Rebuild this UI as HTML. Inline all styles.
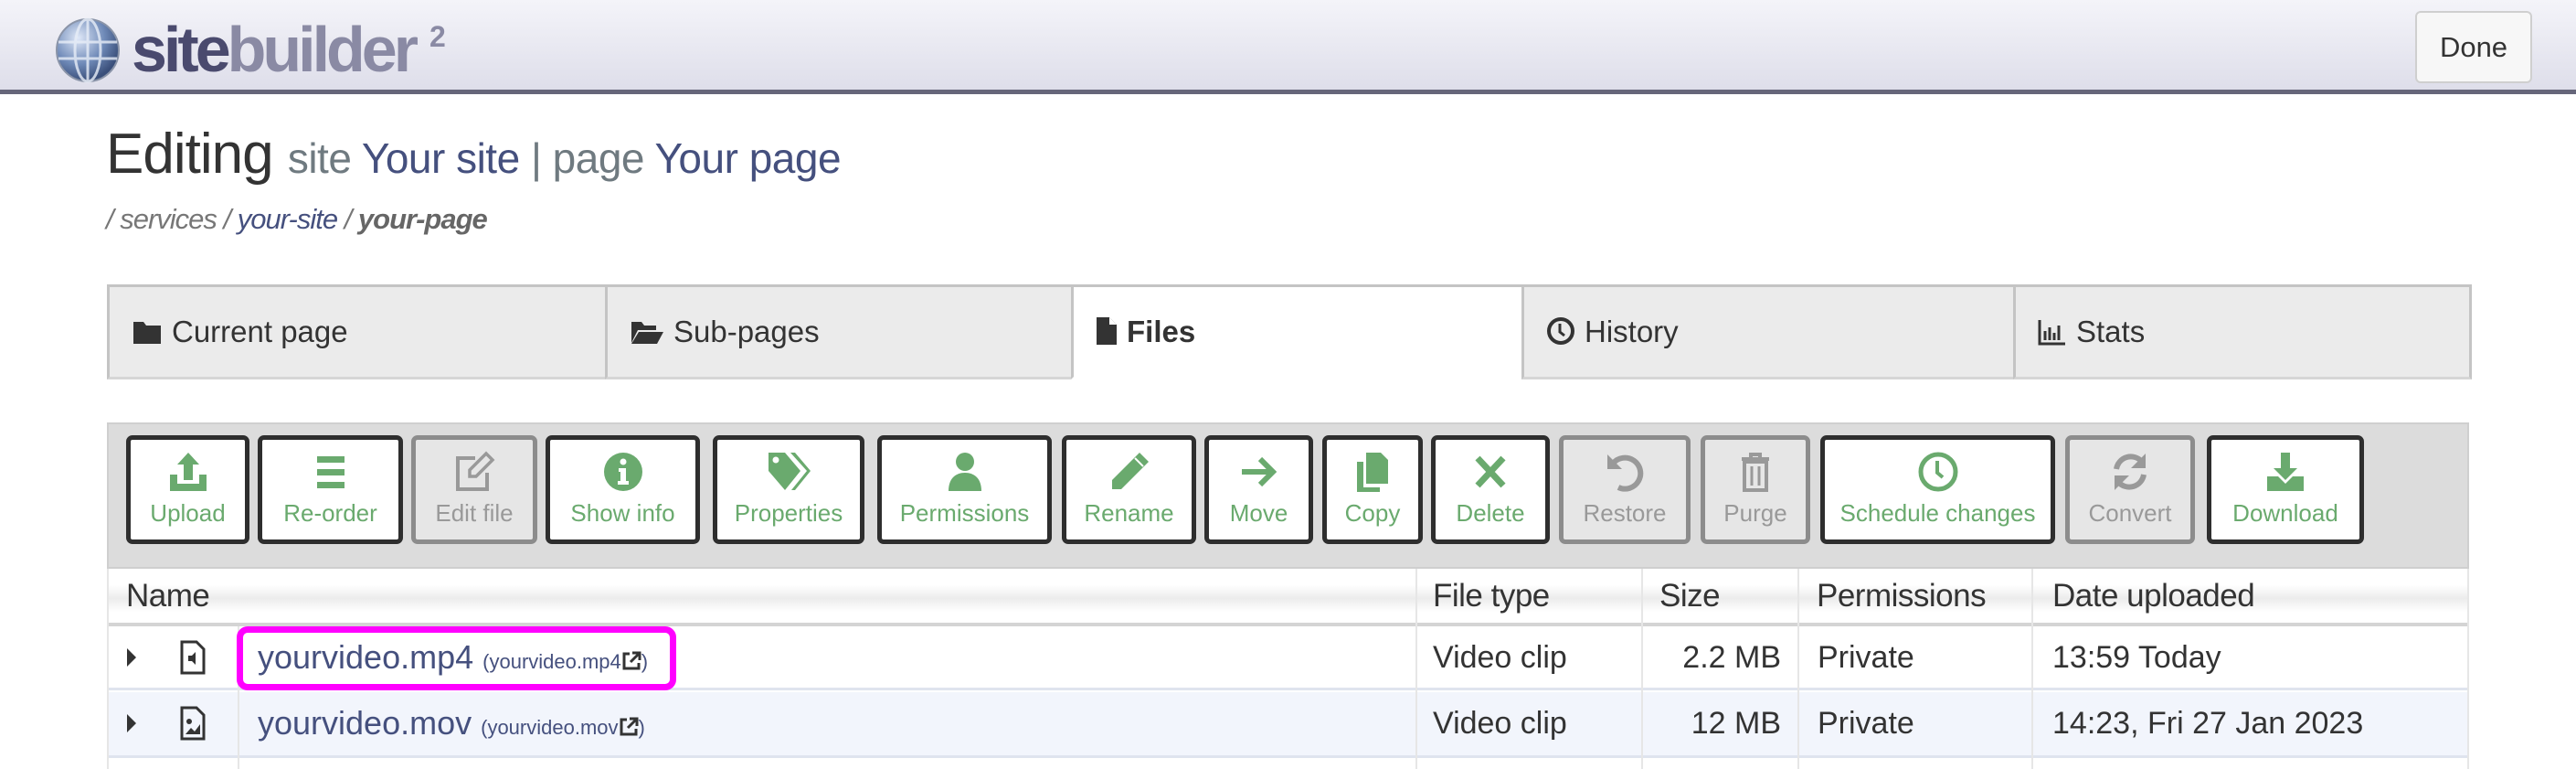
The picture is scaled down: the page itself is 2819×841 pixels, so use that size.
<!DOCTYPE html>
<html><head><meta charset="utf-8"><style>
*{box-sizing:border-box;margin:0;padding:0}
body{width:2819px;height:841px;overflow:hidden;background:#fff;font-family:"Liberation Sans",sans-serif;position:relative;color:#333}
.a{position:absolute}
.hdr{left:0;top:0;width:2819px;height:103px;background:linear-gradient(#f4f4f9,#dedeea);border-bottom:5px solid #66667a}
.tab{position:absolute;top:311px;height:104px;background:#ebebeb;border:3px solid #c4c4c4;border-bottom:3px solid #d6d6d6;font-size:33px;color:#333;padding-left:24px;line-height:98px;white-space:nowrap}
.tab svg{vertical-align:-4px;margin-right:10px}
.btn{position:absolute;top:476px;height:119px;border:5px solid #2e2e2e;border-radius:7px;background:#fff;color:#6aaa6e;font-size:26px;text-align:center;white-space:nowrap}
.btn.d{border-color:#8c8c8c;background:#e6e6e6;color:#999}
.btn svg{position:absolute;left:50%;top:12px;transform:translateX(-50%)}
.btn span{position:absolute;left:0;right:0;top:65px}
.th{position:absolute;top:632px;font-size:35px;color:#333;letter-spacing:-0.5px}
.td{position:absolute;font-size:34px;color:#333}
.vl{position:absolute;width:2px;background:#e6e6e6}
.lnk{color:#45507e}
</style></head><body>
<div class="a hdr"></div>
<svg class="a" style="left:58px;top:18px" width="76" height="74" viewBox="0 0 76 74"><defs><radialGradient id="g" cx="35%" cy="30%" r="70%"><stop offset="0" stop-color="#dfe8f8"/><stop offset=".6" stop-color="#6f8ab8"/><stop offset="1" stop-color="#3a4f7a"/></radialGradient></defs><circle cx="38" cy="37" r="34" fill="url(#g)" stroke="#8a94a8" stroke-width="2"/><g fill="none" stroke="#e8eef8" stroke-width="3" opacity=".8"><ellipse cx="38" cy="37" rx="14" ry="34"/><path d="M6 28 H70 M6 46 H70 M38 3 V71"/></g></svg>
<div class="a" style="left:144px;top:14px;font-size:70px;font-weight:bold;letter-spacing:-4px;color:#4a4a6e;line-height:80px">site<span style="color:#8a8aa4;font-weight:bold">builder</span></div>
<div class="a" style="left:470px;top:22px;font-size:32px;font-weight:bold;color:#8a8aa4">2</div>
<div class="a" style="left:2643px;top:12px;width:128px;height:79px;border:2px solid #cfcfcf;border-radius:6px;background:#f7f7f7;font-size:31px;line-height:75px;text-align:center;color:#333">Done</div>

<div class="a" style="left:116px;top:133px;font-size:62px;color:#333;white-space:nowrap;letter-spacing:-1px">Editing <span style="font-size:46px;color:#6f7a80;letter-spacing:-0.5px">site <span class="lnk">Your site</span> | page <span class="lnk">Your page</span></span></div>
<div class="a" style="left:116px;top:222px;font-size:31px;font-style:italic;color:#777;white-space:nowrap;letter-spacing:-1px">/ services / <span class="lnk">your-site</span> / <b style="color:#666">your-page</b></div>

<div class="tab" style="left:117px;width:548px"><svg width="34" height="30" viewBox="0 0 34 30"><path d="M2 4h11l3 4h16v20H2z" fill="#333"/></svg>Current page</div>
<div class="tab" style="left:662px;width:513px"><svg width="38" height="30" viewBox="0 0 38 30"><path d="M2 4h11l3 4h13v5H9L2 27z" fill="#333"/><path d="M10 15h27l-7 13H2z" fill="#333"/></svg>Sub-pages</div>
<div class="tab" style="left:1172px;width:496px;background:#fff;border-bottom-color:#fff;font-weight:bold"><svg width="24" height="32" viewBox="0 0 24 32"><path d="M1 1h14l8 8v22H1z" fill="#333"/><path d="M15 1v8h8" fill="#fff"/></svg>Files</div>
<div class="tab" style="left:1665px;width:541px"><svg width="32" height="32" viewBox="0 0 32 32"><circle cx="16" cy="16" r="13" fill="none" stroke="#333" stroke-width="4"/><path d="M15 8v9l5 4" stroke="#333" stroke-width="3" fill="none"/></svg>History</div>
<div class="tab" style="left:2203px;width:502px"><svg width="32" height="30" viewBox="0 0 32 30"><path d="M2 2v26h28" stroke="#333" stroke-width="3" fill="none"/><path d="M8 14v10M13 10v14M18 16v8M23 8v16" stroke="#333" stroke-width="3"/></svg>Stats</div>

<div class="a" style="left:117px;top:462px;width:2585px;height:160px;background:#dcdcdc;border:2px solid #cfcfcf"></div>

<div class="btn" style="left:138px;width:135px"><svg width="46" height="46" viewBox="0 0 46 46"><path d="M23 2l12 13h-7v17h-10V15h-7z" fill="#6aaa6e"/><path d="M3 26h8v10h24V26h8v18H3z" fill="#6aaa6e"/></svg><span>Upload</span></div>
<div class="btn" style="left:282px;width:159px"><svg width="46" height="46" viewBox="0 0 46 46"><path d="M8 6h30v7H8zM8 20h30v7H8zM8 34h30v7H8z" fill="#6aaa6e"/></svg><span>Re-order</span></div>
<div class="btn d" style="left:450px;width:138px"><svg width="46" height="46" viewBox="0 0 46 46"><path d="M24 8H5v34h32V24" fill="none" stroke="#999" stroke-width="4"/><path d="M36 3l7 7-18 18h-7v-7z" fill="none" stroke="#999" stroke-width="3.5"/></svg><span>Edit file</span></div>
<div class="btn" style="left:597px;width:169px"><svg width="46" height="46" viewBox="0 0 46 46"><circle cx="23" cy="23" r="21" fill="#6aaa6e"/><circle cx="23" cy="12" r="3.5" fill="#fff"/><path d="M18 19h8v14h3v4H17v-4h3v-10h-2z" fill="#fff"/></svg><span>Show info</span></div>
<div class="btn" style="left:780px;width:166px"><svg width="50" height="46" viewBox="0 0 50 46"><path d="M3 2h18l17 20-17 21L3 22z" fill="#6aaa6e"/><circle cx="11" cy="10" r="3.5" fill="#fff"/><path d="M27 2h5l17 20-17 21h-4l17-21z" fill="#6aaa6e"/></svg><span>Properties</span></div>
<div class="btn" style="left:960px;width:191px"><svg width="46" height="46" viewBox="0 0 46 46"><circle cx="23" cy="12" r="10" fill="#6aaa6e"/><path d="M5 44c0-14 8-20 18-20s18 6 18 20z" fill="#6aaa6e"/></svg><span>Permissions</span></div>
<div class="btn" style="left:1162px;width:147px"><svg width="46" height="46" viewBox="0 0 46 46"><path d="M34 2l10 10L14 42H4V32z" fill="#6aaa6e"/><path d="M29 8l9 9" stroke="#fff" stroke-width="2"/></svg><span>Rename</span></div>
<div class="btn" style="left:1318px;width:119px"><svg width="46" height="46" viewBox="0 0 46 46"><path d="M4 23h34M24 9l14 14-14 14" fill="none" stroke="#6aaa6e" stroke-width="6"/></svg><span>Move</span></div>
<div class="btn" style="left:1447px;width:110px"><svg width="46" height="46" viewBox="0 0 46 46"><path d="M16 2h16l8 8v26H16z" fill="#6aaa6e"/><path d="M6 12h7v28h18v5H6z" fill="#6aaa6e"/></svg><span>Copy</span></div>
<div class="btn" style="left:1566px;width:130px"><svg width="46" height="46" viewBox="0 0 46 46"><path d="M9 8l28 30M37 8L9 38" stroke="#6aaa6e" stroke-width="7"/></svg><span>Delete</span></div>
<div class="btn d" style="left:1706px;width:144px"><svg width="46" height="46" viewBox="0 0 46 46"><path d="M10 14a17 17 0 1 1 6 26" fill="none" stroke="#999" stroke-width="6"/><path d="M4 4v16h16z" fill="#999"/></svg><span>Restore</span></div>
<div class="btn d" style="left:1861px;width:120px"><svg width="46" height="46" viewBox="0 0 46 46"><path d="M8 9h30M18 9V4h10v5M11 12h24v31H11z" fill="none" stroke="#999" stroke-width="4"/><path d="M19 17v21M27 17v21" stroke="#999" stroke-width="3"/></svg><span>Purge</span></div>
<div class="btn" style="left:1992px;width:257px"><svg width="46" height="46" viewBox="0 0 46 46"><circle cx="23" cy="23" r="19" fill="none" stroke="#6aaa6e" stroke-width="5"/><path d="M22 11v13l6 5" fill="none" stroke="#6aaa6e" stroke-width="4"/></svg><span>Schedule changes</span></div>
<div class="btn d" style="left:2260px;width:142px"><svg width="46" height="46" viewBox="0 0 46 46"><path d="M8 20a16 16 0 0 1 28-8M38 26a16 16 0 0 1-28 8" fill="none" stroke="#999" stroke-width="6"/><path d="M40 3v16H24zM6 43V27h16z" fill="#999"/></svg><span>Convert</span></div>
<div class="btn" style="left:2415px;width:172px"><svg width="46" height="46" viewBox="0 0 46 46"><path d="M18 2h10v17h8L23 32 10 19h8z" fill="#6aaa6e"/><path d="M3 28h12l8 8 8-8h12v16H3z" fill="#6aaa6e"/></svg><span>Download</span></div>

<div class="a" style="left:117px;top:622px;width:2585px;height:63px;background:linear-gradient(#fff,#fff 30%,#ececec 55%,#fff 80%);border-left:2px solid #e6e6e6;border-right:2px solid #e6e6e6;border-bottom:4px solid #d4d4d4"></div>
<div class="th" style="left:138px">Name</div>
<div class="th" style="left:1568px">File type</div>
<div class="th" style="left:1816px">Size</div>
<div class="th" style="left:1988px">Permissions</div>
<div class="th" style="left:2246px">Date uploaded</div>

<div class="a" style="left:117px;top:685px;width:2585px;height:70px;background:#fff;border-bottom:3px solid #dfe4ee"></div>
<div class="a" style="left:117px;top:757px;width:2585px;height:72px;background:#f2f5fc;border-bottom:3px solid #dfe4ee"></div>
<div class="vl" style="left:117px;top:622px;height:219px"></div>
<div class="vl" style="left:2700px;top:622px;height:219px"></div>
<div class="vl" style="left:260px;top:685px;height:156px"></div>
<div class="vl" style="left:1549px;top:622px;height:219px"></div>
<div class="vl" style="left:1796px;top:622px;height:219px"></div>
<div class="vl" style="left:1967px;top:622px;height:219px"></div>
<div class="vl" style="left:2223px;top:622px;height:219px"></div>

<svg class="a" style="left:137px;top:707px" width="14" height="24" viewBox="0 0 14 24"><path d="M2 2l10 10-10 10z" fill="#333"/></svg>
<svg class="a" style="left:137px;top:779px" width="14" height="24" viewBox="0 0 14 24"><path d="M2 2l10 10-10 10z" fill="#333"/></svg>
<svg class="a" style="left:197px;top:700px" width="28" height="38" viewBox="0 0 28 38"><path d="M2 2h16l8 8v26H2z" fill="none" stroke="#333" stroke-width="3"/><path d="M9 17h4l4-4v14l-4-4H9z" fill="#333"/></svg>
<svg class="a" style="left:197px;top:772px" width="28" height="38" viewBox="0 0 28 38"><path d="M2 2h16l8 8v26H2z" fill="none" stroke="#333" stroke-width="3"/><circle cx="10" cy="17" r="3" fill="#333"/><path d="M6 31l6-7 4 4 6-8v11z" fill="#333"/></svg>

<div class="td" style="left:282px;top:698px;white-space:nowrap;font-size:36px"><span class="lnk">yourvideo.mp4</span> <span style="font-size:22px;color:#45507e">(yourvideo.mp4<svg width="22" height="22" viewBox="0 0 22 22" style="vertical-align:-3px"><path d="M9 3H3v16h16v-6" fill="none" stroke="#333" stroke-width="3"/><path d="M12 2h8v8M20 2l-10 10" fill="none" stroke="#333" stroke-width="3"/></svg>)</span></div>
<div class="td" style="left:282px;top:770px;white-space:nowrap;font-size:36px"><span class="lnk">yourvideo.mov</span> <span style="font-size:22px;color:#45507e">(yourvideo.mov<svg width="22" height="22" viewBox="0 0 22 22" style="vertical-align:-3px"><path d="M9 3H3v16h16v-6" fill="none" stroke="#333" stroke-width="3"/><path d="M12 2h8v8M20 2l-10 10" fill="none" stroke="#333" stroke-width="3"/></svg>)</span></div>
<div class="a" style="left:259px;top:685px;width:481px;height:70px;border:7px solid #ff00ff;border-radius:12px"></div>

<div class="td" style="left:1568px;top:700px">Video clip</div>
<div class="td" style="left:1800px;width:149px;text-align:right;top:700px">2.2 MB</div>
<div class="td" style="left:1989px;top:700px">Private</div>
<div class="td" style="left:2246px;top:700px">13:59 Today</div>
<div class="td" style="left:1568px;top:772px">Video clip</div>
<div class="td" style="left:1800px;width:149px;text-align:right;top:772px">12 MB</div>
<div class="td" style="left:1989px;top:772px">Private</div>
<div class="td" style="left:2246px;top:772px">14:23, Fri 27 Jan 2023</div>
</body></html>
